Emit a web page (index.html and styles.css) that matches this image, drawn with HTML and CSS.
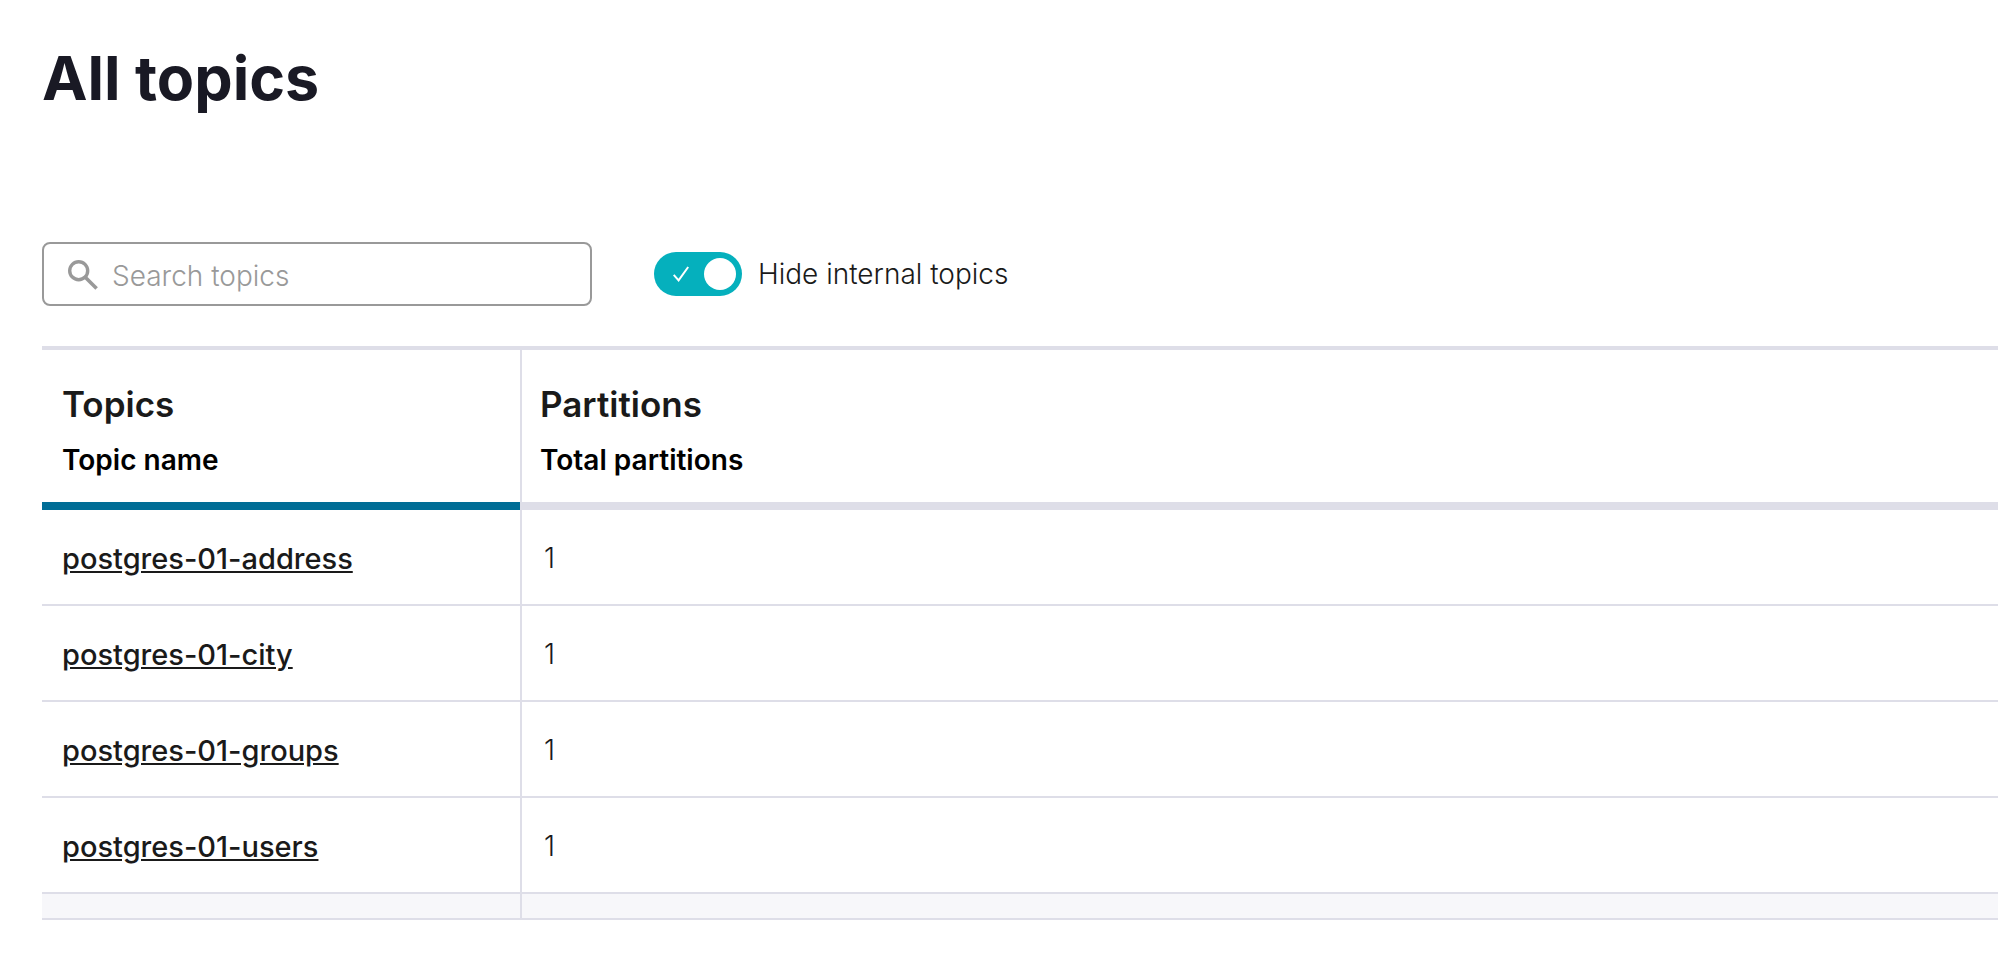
FILE: index.html
```html
<!DOCTYPE html>
<html lang="en">
<head>
<meta charset="utf-8">
<title>All topics</title>
<link rel="stylesheet" href="styles.css">
</head>
<body>
<main class="page">
  <h1 class="page-title">All topics</h1>
  <div class="toolbar">
    <label class="search">
      <svg class="search-icon" viewBox="0 0 30 30" aria-hidden="true">
        <circle cx="10.7" cy="10.7" r="9" fill="none" stroke="currentColor" stroke-width="3.4"/>
        <path d="M17 17L28.6 28.6" fill="none" stroke="currentColor" stroke-width="3.6"/>
      </svg>
      <input class="search-input" type="text" placeholder="Search topics" aria-label="Search topics">
    </label>
    <label class="toggle">
      <input class="toggle-input" type="checkbox" role="switch" checked>
      <span class="toggle-track" aria-hidden="true">
        <svg class="toggle-check" viewBox="0 0 16 16">
          <path d="M0.7 8.8L5.6 14.4L15.2 1" fill="none" stroke="currentColor" stroke-width="2"/>
        </svg>
        <span class="toggle-knob"></span>
      </span>
      <span class="toggle-label">Hide internal topics</span>
    </label>
  </div>
  <table class="topics">
    <colgroup><col class="col-name"><col></colgroup>
    <thead>
      <tr class="group-row"><th scope="col">Topics</th><th scope="col">Partitions</th></tr>
      <tr class="field-row"><th scope="col" class="sorted" aria-sort="ascending">Topic name</th><th scope="col">Total partitions</th></tr>
    </thead>
    <tbody>
      <tr><td><a href="#address">postgres-01-address</a></td><td class="count">1</td></tr>
      <tr><td><a href="#city">postgres-01-city</a></td><td class="count">1</td></tr>
      <tr><td><a href="#groups">postgres-01-groups</a></td><td class="count">1</td></tr>
      <tr><td><a href="#users">postgres-01-users</a></td><td class="count">1</td></tr>
    </tbody>
    <tfoot><tr><td></td><td></td></tr></tfoot>
  </table>
</main>
</body>
</html>
```
FILE: styles.css
```css
* { box-sizing: border-box; }

body {
  margin: 0;
  background: #fff;
  color: #1a1a1a;
  font-family: Inter, "Liberation Sans", sans-serif;
  font-size: 28px;
  font-weight: 300;
}

.page { padding: 38px 0 48px 42px; }

.page-title {
  margin: 0 0 124px;
  color: #191924;
  font-size: 61px;
  font-weight: 700;
  line-height: 80px;
}

.toolbar {
  display: flex;
  align-items: center;
  gap: 62px;
  margin-bottom: 40px;
}

.search {
  display: flex;
  align-items: center;
  gap: 14px;
  width: 550px;
  height: 64px;
  padding: 2px 24px 0;
  border: 2px solid #999;
  border-radius: 8px;
}

.search-icon { flex: none; width: 30px; height: 30px; color: #999; }

.search-input {
  flex: 1;
  min-width: 0;
  padding: 2px 0 0;
  border: 0;
  outline: 0;
  background: none;
  color: inherit;
  font: inherit;
}

.search-input::placeholder { color: #999; opacity: 1; }

.toggle { position: relative; display: flex; align-items: center; gap: 16px; cursor: pointer; }

.toggle-input { position: absolute; margin: 0; width: 88px; height: 44px; opacity: 0; }

.toggle-track {
  display: flex;
  align-items: center;
  justify-content: space-between;
  width: 88px;
  height: 44px;
  padding: 0 6px 0 19px;
  border-radius: 22px;
  background: #05b0bd;
}

.toggle-check { width: 16px; height: 16px; color: #fff; }

.toggle-knob { width: 32px; height: 32px; border-radius: 50%; background: #fff; }

.topics {
  width: 100%;
  border-top: 4px solid #dedee8;
  border-spacing: 0;
  table-layout: fixed;
}

.col-name { width: 478px; }

.topics th,
.topics td { padding: 0 20px; text-align: left; }

.topics th + th,
.topics td + td { padding-left: 18px; border-left: 2px solid #dedee8; }

.group-row th { padding-top: 32px; font-size: 35px; font-weight: 600; line-height: 44px; }

.topics th { vertical-align: top; }

.field-row th {
  height: 84px;
  padding-top: 16px;
  border-bottom: 8px solid #dedee8;
  color: #000;
  font-weight: 600;
  line-height: 36px;
}

.topics .sorted { border-bottom-color: #006d96; }

.topics tbody td { height: 96px; padding-top: 2px; border-bottom: 2px solid #dedee8; }

.topics tbody .count { padding-left: 22px; }

.topics a { color: inherit; font-size: 29px; font-weight: 500; text-decoration: underline; }

.topics tfoot td { height: 26px; border-bottom: 2px solid #dedee8; background: #f7f7fa; }
```
